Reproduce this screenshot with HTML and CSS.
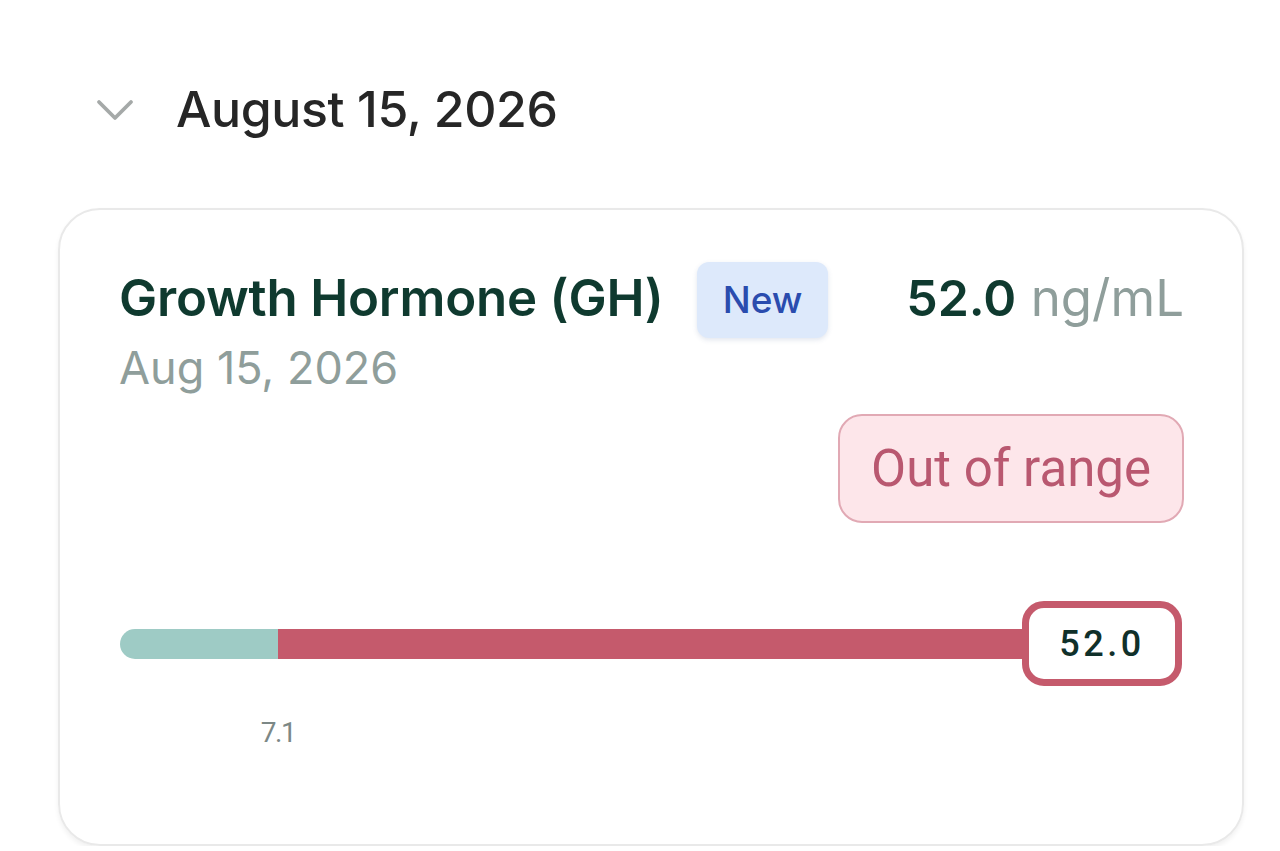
FILE: index.html
```html
<!DOCTYPE html>
<html>
<head>
    <title>Lab results</title>
<link rel="stylesheet" href="styles.css">
</head>
<body>
    <div class="day-header">
        <svg class="chevron" width="38" height="24" viewBox="0 0 38 24">
            <path d="M3 4 L19 20 L35 4" fill="none" stroke="#a5a9a8" stroke-width="3.8" stroke-linecap="round" stroke-linejoin="round"/>
        </svg>
        <span class="day-title">August 15, 2026</span>
    </div>

    <div class="result-card">
        <div class="card-top">
            <div class="marker-info">
                <div class="marker-name">Growth Hormone (GH)</div>
                <div class="marker-date">Aug 15, 2026</div>
            </div>
            <span class="badge-new">New</span>
            <div class="marker-value">
                <span class="value-num">52.0</span>
                <span class="value-unit">ng/mL</span>
            </div>
        </div>

        <div class="status-row">
            <span class="status-pill">Out of range</span>
        </div>

        <div class="range-bar">
            <div class="range-track">
                <div class="range-low" style="width: 158px;"></div>
                <div class="range-high"></div>
            </div>
            <div class="range-bubble">52.0</div>
            <span class="range-tick" style="left: 158px;">7.1</span>
        </div>
    </div>
</body>
</html>
```

FILE: styles.css
```css
body {
    margin: 0;
    background-color: white;
    font-family: Inter, "Noto Sans", sans-serif;
}
.day-header {
    display: flex;
    align-items: center;
    gap: 42px;
    padding: 76px 0 0 96px;
    height: 66px;
}
.chevron {
    margin-top: 2px;
}
.day-title {
    font-size: 50px;
    font-weight: 500;
    color: #262626;
    letter-spacing: -0.4px;
}
.result-card {
    margin: 66px 0 0 58px;
    width: 1186px;
    height: 638px;
    box-sizing: border-box;
    padding: 60px 60px 0 60px;
    border: 2px solid #e9e9e9;
    border-radius: 42px;
    box-shadow: 0 3px 5px rgba(0,0,0,0.06);
}
.card-top {
    display: flex;
    align-items: flex-start;
}
.marker-info {
    margin-left: -1px;
}
.marker-name {
    font-size: 51px;
    font-weight: 600;
    color: #0f3a2f;
    line-height: 56px;
    letter-spacing: -0.2px;
}
.marker-date {
    font-size: 45px;
    color: #8f9e9b;
    line-height: 54px;
    margin-top: 15px;
}
.badge-new {
    margin: -8px 0 0 33px;
    background-color: #dde9fb;
    color: #2a4cae;
    font-size: 37px;
    font-weight: 500;
    padding: 18px 26px;
    border-radius: 12px;
    box-shadow: 0 2px 5px rgba(60,90,140,0.15);
    line-height: 40px;
}
.marker-value {
    margin-left: auto;
    margin-right: -2px;
    font-size: 51px;
    line-height: 56px;
}
.value-num {
    font-weight: 600;
    font-size: 50px;
    color: #0f3a2f;
}
.value-unit {
    color: #8f9e9b;
}
.status-row {
    display: flex;
    justify-content: flex-end;
    margin: 19px -2px 0 0;
}
.status-pill {
    background-color: #fde6ea;
    border: 2px solid #e1a9b4;
    color: #b95870;
    font-family: Roboto, "Noto Sans", sans-serif;
    font-size: 51px;
    line-height: 51px;
    padding: 27px 31px;
    border-radius: 24px;
}
.range-bar {
    position: relative;
    margin-top: 78px;
    height: 130px;
}
.range-track {
    display: flex;
    height: 30px;
    padding-top: 28px;
}
.range-low {
    background-color: #9ecbc5;
    border-radius: 15px 0 0 15px;
}
.range-high {
    flex: 1;
    background-color: #c55a6c;
    border-radius: 0 15px 15px 0;
}
.range-bubble {
    position: absolute;
    right: 0;
    top: 0;
    width: 146px;
    height: 71px;
    border: 7px solid #c55a6c;
    border-radius: 22px;
    background-color: white;
    display: flex;
    align-items: center;
    justify-content: center;
    font-family: Roboto, "Noto Sans", sans-serif;
    font-size: 36px;
    font-weight: 500;
    letter-spacing: 3.5px;
    color: #10302a;
}
.range-tick {
    position: absolute;
    top: 115px;
    transform: translateX(-50%);
    font-family: Roboto, "Noto Sans", sans-serif;
    font-size: 28px;
    color: #7c8886;
    letter-spacing: -1.5px;
}
```
